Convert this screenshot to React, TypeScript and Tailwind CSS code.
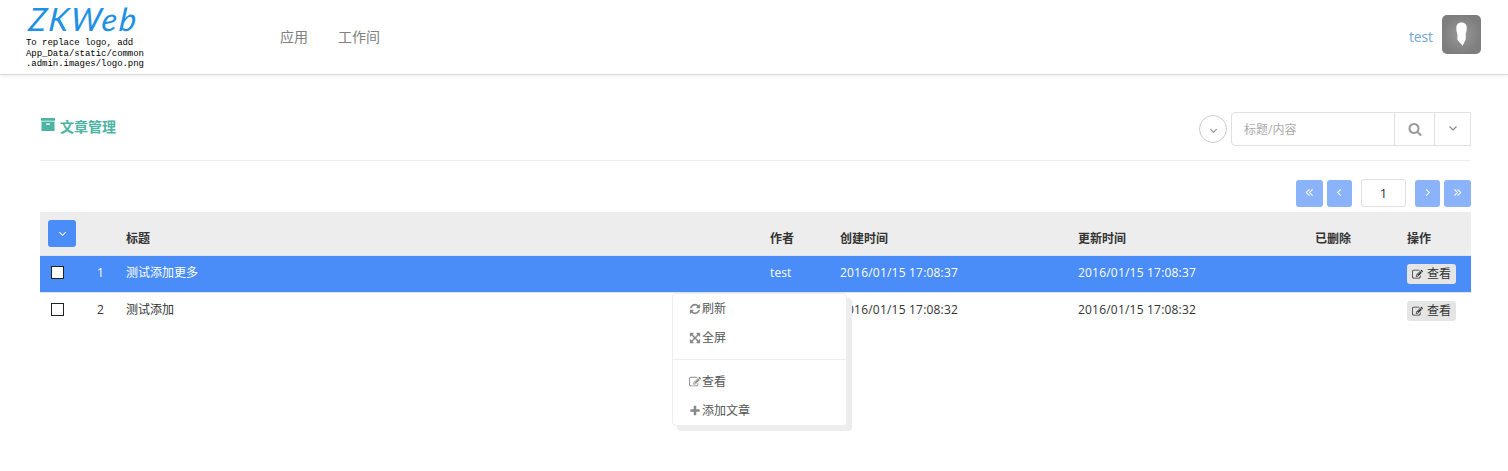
import React from "react";

const PATHS = {
  refresh:
    "M1639 1056q0 5-1 7-64 268-268 434.5t-478 166.5q-146 0-282.5-55t-243.5-157l-129 129q-19 19-45 19t-45-19-19-45v-448q0-26 19-45t45-19h448q26 0 45 19t19 45-19 45l-137 137q71 66 161 102t187 36q134 0 250-65t186-179q11-17 53-117 8-23 30-23h192q13 0 22.5 9.5t9.5 22.5zm25-800v448q0 26-19 45t-45 19h-448q-26 0-45-19t-19-45 19-45l138-138q-148-137-349-137-134 0-250 65t-186 179q-11 17-53 117-8 23-30 23h-199q-13 0-22.5-9.5t-9.5-22.5v-7q65-268 270-434.5t480-166.5q146 0 284 55.5t245 156.5l130-129q19-19 45-19t45 19 19 45z",
  expand:
    "M1411 541l-355 355 355 355 144-144q29-31 70-14 39 17 39 59v448q0 26-19 45t-45 19h-448q-42 0-59-40-17-39 14-69l144-144-355-355-355 355 144 144q31 30 14 69-17 40-59 40h-448q-26 0-45-19t-19-45v-448q0-42 40-59 39-17 69 14l144 144 355-355-355-355-144 144q-19 19-45 19-12 0-24-5-40-17-40-59v-448q0-26 19-45t45-19h448q42 0 59 40 17 39-14 69l-144 144 355 355 355-355-144-144q-31-30-14-69 17-40 59-40h448q26 0 45 19t19 45v448q0 42-39 59-13 5-25 5-26 0-45-19z",
  edit:
    "M888 1184l116-116-152-152-116 116v56h96v96h56zm440-720q-16-16-33 1l-350 350q-17 17-1 33t33-1l350-350q17-17 1-33zm80 594v190q0 119-84.5 203.5t-203.5 84.5h-832q-119 0-203.5-84.5t-84.5-203.5v-832q0-119 84.5-203.5t203.5-84.5h832q63 0 117 25 15 7 18 23 3 17-9 29l-49 49q-14 14-32 8-23-6-45-6h-832q-66 0-113 47t-47 113v832q0 66 47 113t113 47h832q66 0 113-47t47-113v-126q0-13 9-22l64-64q15-15 35-7t20 29zm-96-738l288 288-672 672h-288v-288zm444 132l-92 92-288-288 92-92q28-28 68-28t68 28l152 152q28 28 28 68t-28 68z",
  plus:
    "M1600 736v192q0 40-28 68t-68 28h-416v416q0 40-28 68t-68 28h-192q-40 0-68-28t-28-68v-416h-416q-40 0-68-28t-28-68v-192q0-40 28-68t68-28h416v-416q0-40 28-68t68-28h192q40 0 68 28t28 68v416h416q40 0 68 28t28 68z",
  search:
    "M1216 832q0-185-131.5-316.5t-316.5-131.5-316.5 131.5-131.5 316.5 131.5 316.5 316.5 131.5 316.5-131.5 131.5-316.5zm512 832q0 52-38 90t-90 38q-54 0-90-38l-343-342q-179 124-399 124-143 0-273.5-55.5t-225-150-150-225-55.5-273.5 55.5-273.5 150-225 225-150 273.5-55.5 273.5 55.5 225 150 150 225 55.5 273.5q0 220-124 399l343 343q37 37 37 90z",
};

function Icon({ name, className }: { name: keyof typeof PATHS; className: string }) {
  return (
    <svg viewBox="0 0 1792 1792" fill="currentColor" className={className}>
      <path d={PATHS[name]} />
    </svg>
  );
}

const ANGLES = {
  down: "M1.5 3.5 5 7l3.5-3.5",
  left: "M6.5 1.5 3 5l3.5 3.5",
  right: "M3.5 1.5 7 5 3.5 8.5",
  first: "M5 1.5 1.5 5 5 8.5M8.5 1.5 5 5l3.5 3.5",
  last: "M1.5 1.5 5 5 1.5 8.5M5 1.5 8.5 5 5 8.5",
};

function Angle({ dir, className }: { dir: keyof typeof ANGLES; className: string }) {
  return (
    <svg viewBox="0 0 10 10" fill="none" stroke="currentColor" strokeWidth="1.15" className={className}>
      <path d={ANGLES[dir]} />
    </svg>
  );
}

const COLS = "grid grid-cols-[49px_29px_644px_70px_238px_237px_92px_72px]";

const ROWS = [
  { id: 1, title: "测试添加更多", author: "test", time: "2016/01/15 17:08:37", selected: true },
  { id: 2, title: "测试添加", author: "", time: "2016/01/15 17:08:32", selected: false },
];

function PageButton({ dir, width }: { dir: keyof typeof ANGLES; width: string }) {
  return (
    <button className={`flex h-[27px] items-center justify-center rounded-[3px] bg-[#8ab3f9] pb-px text-white ${width}`}>
      <Angle dir={dir} className="size-[9px]" />
    </button>
  );
}

function MenuItem({ icon, label }: { icon: keyof typeof PATHS; label: string }) {
  return (
    <div className="flex h-[29px] items-center pl-4">
      <Icon name={icon} className="mr-px size-3 text-[#888]" />
      <span className="text-[#555]">{label}</span>
    </div>
  );
}

export default function App() {
  return (
    <div className="relative h-[471px] w-[1508px] bg-white font-['Open_Sans','Noto_Sans_CJK_SC',sans-serif] text-xs text-[#333]">
      <header className="flex h-[75px] border-b border-[#dadada] shadow-[0_1px_4px_rgba(0,0,0,0.07)]">
        <div className="w-[254px] shrink-0 pl-[26px]">
          <div className="ml-[3px] h-[37px] w-fit -skew-x-6 text-[32px] leading-[37px] font-normal tracking-[2.2px] whitespace-nowrap text-[#2090e5] italic font-['Lato',sans-serif]">
            ZKWeb
          </div>
          <div className="mt-px font-['Liberation_Mono',monospace] text-[9px] leading-[10.5px] tracking-[-0.04px] whitespace-nowrap text-black">
            To replace logo, add
            <br />
            App_Data/static/common
            <br />
            .admin.images/logo.png
          </div>
        </div>
        <nav className="flex h-[74px] items-center gap-[30px] pl-[26px] text-sm text-[#808080]">
          <span>应用</span>
          <span>工作间</span>
        </nav>
        <div className="mr-[27px] ml-auto flex items-center">
          <span className="mr-[9px] text-sm tracking-[-0.1px] text-[#72a8d3]">test</span>
          <svg viewBox="0 0 39 39" className="mb-[5px] size-[39px]">
            <defs>
              <radialGradient id="avatar">
                <stop offset="0" stopColor="#999" />
                <stop offset="1" stopColor="#7e7e7e" />
              </radialGradient>
            </defs>
            <rect width="39" height="39" rx="5" fill="url(#avatar)" />
            <path d="M19.5 7.5c3.8 0 5.4 2.3 5.3 5.6-.1 2.6-.5 4.3-1.2 6.2.1 1.4.4 2.2.2 3.6.1 1.5-.4 2.6-1.2 3.9l-2 3.9c-1-1.5-2.8-2.7-3.9-4.5-.8-.7-1.5-1.7-1.3-3 .1-1.5.2-2.8-.1-4.2-.7-1.8-1-3.8-1-5.8 0-3.4 1.8-5.7 5.2-5.7Z" fill="#fff" />
          </svg>
        </div>
      </header>

      <main className="mr-[37px] ml-10">
        <div className="flex h-[86px] items-start border-b border-[#eee]">
          <div className="mt-[42px] flex items-center text-[#4db3a2]">
            <svg viewBox="0 0 14 13" className="-mt-[5px] mr-[5px] ml-[1px] h-[13px] w-[14px]" fill="currentColor">
              <path d="M0 0h14v2.8H0zM.5 3.6h13V13H.5zM5 5.4v1.3h4V5.4z" fillRule="evenodd" />
            </svg>
            <h1 className="text-sm leading-5 font-semibold">文章管理</h1>
          </div>
          <div className="mt-[37px] ml-auto flex items-center">
            <button className="mr-1 flex size-7 items-center justify-center rounded-full border border-[#ccc] pt-[2px] text-[#888]">
              <Angle dir="down" className="size-[9px]" />
            </button>
            <div className="flex h-[34px] w-[240px] rounded-l-[4px] border border-[#e0e0e0]">
              <div className="flex flex-1 items-center pt-px pl-3 text-[#aaa]">标题/内容</div>
              <button className="flex w-10 items-center justify-center border-l border-[#e0e0e0] pb-px text-[#999]">
                <Icon name="search" className="size-[14px]" />
              </button>
              <button className="flex w-9 items-center justify-center border-l border-[#e0e0e0] pb-[2px] text-[#888]">
                <Angle dir="down" className="size-[10px]" />
              </button>
            </div>
          </div>
        </div>

        <div className="flex h-[51px] items-start justify-end pt-[18px]">
          <div className="flex items-center gap-1">
            <PageButton dir="first" width="w-[27px]" />
            <PageButton dir="left" width="w-[25px]" />
            <div className="mx-[5px] flex h-7 w-[45px] items-center justify-center rounded-[3px] border border-[#e0e0e0] pt-px text-[13px]">1</div>
            <PageButton dir="right" width="w-[25px]" />
            <PageButton dir="last" width="w-[27px]" />
          </div>
        </div>

        <div className={`${COLS} h-11 border-b border-[#dce6f5] bg-[#ededed] font-semibold [&>span]:pt-[19px] [&>span]:pl-2`}>
          <div className="pt-2 pl-2">
            <button className="flex h-[27px] w-7 items-center justify-center rounded-[3px] bg-[#4b8df8] text-white">
              <Angle dir="down" className="size-[9px]" />
            </button>
          </div>
          <span />
          <span>标题</span>
          <span>作者</span>
          <span>创建时间</span>
          <span>更新时间</span>
          <span>已删除</span>
          <span>操作</span>
        </div>
        {ROWS.map((row) => (
          <div
            key={row.id}
            className={`${COLS} h-[37px] items-center border-b pb-[3px] [&>span]:pl-2 ${
              row.selected ? "border-[#dce6f5] bg-[#4b8df8] text-white" : "border-transparent"
            }`}
          >
            <div className="pl-[11px]">
              <div className="size-[13px] border border-[#222] bg-white" />
            </div>
            <span>{row.id}</span>
            <span>{row.title}</span>
            <span className="tracking-[0.1px]">{row.author}</span>
            <span className="tracking-[0.2px]">{row.time}</span>
            <span className="tracking-[0.2px]">{row.time}</span>
            <span />
            <div className="pt-[3px] pl-2">
              <button className="flex h-5 w-[49px] items-center rounded-[3px] bg-[#e5e5e5] pl-[5px] text-[#333]">
                <Icon name="edit" className="mr-[4px] size-[11px]" />
                查看
              </button>
            </div>
          </div>
        ))}
      </main>

      <div className="absolute top-[293px] left-[672px] h-[133px] w-[175px] rounded-[4px] border border-[#eee] bg-white shadow-[5px_5px_0_#ededed]">
        <MenuItem icon="refresh" label="刷新" />
        <MenuItem icon="expand" label="全屏" />
        <div className="mt-[7px] mb-[7px] border-t border-[#eee]" />
        <MenuItem icon="edit" label="查看" />
        <MenuItem icon="plus" label="添加文章" />
      </div>
    </div>
  );
}
